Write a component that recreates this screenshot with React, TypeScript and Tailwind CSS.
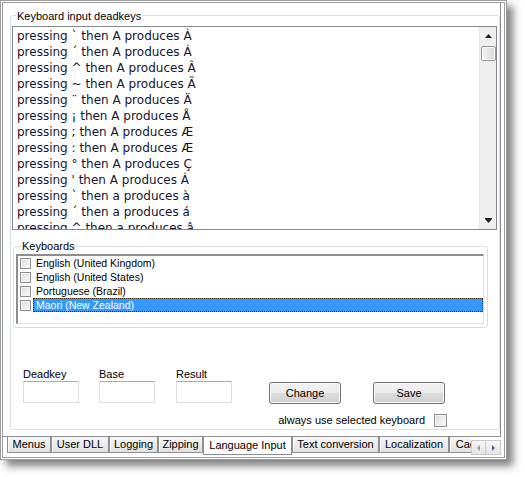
import React from "react";

const deadkeys = [
  "pressing ` then A produces À",
  "pressing ´ then A produces Á",
  "pressing ^ then A produces Â",
  "pressing ~ then A produces Ã",
  "pressing ¨ then A produces Ä",
  "pressing ¡ then A produces Å",
  "pressing ; then A produces Æ",
  "pressing : then A produces Æ",
  "pressing ° then A produces Ç",
  "pressing ' then A produces Á",
  "pressing ` then a produces à",
  "pressing ´ then a produces á",
  "pressing ^ then a produces â",
];

const keyboards = [
  "English (United Kingdom)",
  "English (United States)",
  "Portuguese (Brazil)",
  "Maori (New Zealand)",
];

const tabs = [
  { label: "Menus", w: "w-[44px]" },
  { label: "User DLL", w: "w-[58px]" },
  { label: "Logging", w: "w-[49px]" },
  { label: "Zipping", w: "w-[45px]" },
  { label: "Language Input", w: "w-[89px]", active: true },
  { label: "Text conversion", w: "w-[87px]" },
  { label: "Localization", w: "w-[70px]" },
  { label: "Caching", w: "w-[54px]" },
];

function Check({ size }: { size: string }) {
  return (
    <div
      className={`${size} shrink-0 border border-[#8e8f8f] bg-gradient-to-br from-[#dcdcdc] to-[#fbfbfb] shadow-[inset_0_0_0_1px_#f4f4f4]`}
    />
  );
}

function Field({ label, className }: { label: string; className: string }) {
  return (
    <div className={`flex flex-col ${className}`}>
      <span>{label}</span>
      <div className="w-[56px] h-[22px] border border-[#dbdfe6] border-t-[#abadb3] bg-white" />
    </div>
  );
}

function WinButton({ label, className }: { label: string; className: string }) {
  return (
    <div
      className={`${className} w-[72px] h-[22px] rounded-[3px] border border-[#707070] flex items-center justify-center shadow-[inset_0_0_0_1px_#fbfbfb] bg-[linear-gradient(to_bottom,#f2f2f2_0%,#ebebeb_50%,#dddddd_51%,#cfcfcf_100%)]`}
    >
      {label}
    </div>
  );
}

export default function App() {
  return (
    <div className="w-[525px] h-[477px] bg-white font-['Liberation_Sans',Arial,sans-serif] text-[11px] leading-[13px] text-black">
      <div className="w-[507px] h-[460px] border border-[#9d9d9d] bg-white p-px shadow-[6px_6px_8px_rgba(0,0,0,0.5)]">
        <div className="h-full border border-[#9d9d9d] flex flex-col">
          {/* tab page */}
          <div className="w-[498px] h-[434px] shrink-0 border-r border-b border-[#8c8e94] pt-[12px] pl-[7px]">
            <div className="relative w-[490px] h-[415px] rounded-[3px] border border-[#d5dfe5] pt-[10px]">
              <span className="absolute left-[5px] top-[-6px] bg-white px-px">Keyboard input deadkeys</span>

              {/* deadkey list */}
              <div className="ml-px w-[485px] h-[204px] border border-[#828790] flex bg-white">
                <div className="flex-1 overflow-hidden pl-[4px] pt-px font-['DejaVu_Sans',sans-serif] text-[12px] leading-[16px] text-[#141432] whitespace-pre">
                  {deadkeys.map((l, i) => (
                    <div key={i}>{l}</div>
                  ))}
                </div>
                <div className="w-[17px] bg-[#efefef] border-l border-[#e8e8e8] flex flex-col items-center">
                  <div className="h-[17px] flex items-center justify-center">
                    <svg width="7" height="4" viewBox="0 0 7 4">
                      <path d="M3.5 0 L7 4 L0 4 Z" fill="#222" />
                    </svg>
                  </div>
                  <div className="mt-[2px] w-[15px] h-[15px] rounded-[2px] border border-[#979797] bg-gradient-to-r from-[#f3f3f3] to-[#d9d9d9] shadow-[inset_0_0_0_1px_#fcfcfc]" />
                  <div className="flex-1" />
                  <div className="h-[17px] flex items-center justify-center">
                    <svg width="7" height="5" viewBox="0 0 7 5">
                      <path d="M0 0 H7 V1 L3.5 5 L0 1 Z" fill="#222" />
                    </svg>
                  </div>
                </div>
              </div>

              {/* keyboards group */}
              <div className="relative ml-[2px] mt-[16px] w-[475px] h-[82px] rounded-[3px] border border-[#d5dfe5]">
                <span className="absolute left-[7px] top-[-7px] bg-white px-px">Keyboards</span>
                <div className="ml-[2px] mt-[7px] w-[468px] h-[70px] border-t-2 border-l-2 border-t-[#8d8d8d] border-l-[#8d8d8d] border-r border-b border-r-[#e3e3e3] border-b-[#e3e3e3] bg-white text-[10.5px]">
                  {keyboards.map((k, i) => (
                    <div key={k} className="h-[14px] flex items-center">
                      <div className="ml-[2px]">
                        <Check size="w-[11px] h-[11px]" />
                      </div>
                      {i === 3 ? (
                        <div className="ml-[2px] flex-1 h-[14px] flex items-center pl-[3px] bg-[#3399ff] text-white outline-1 outline-dotted outline-[#3a2a10] -outline-offset-1">
                          {k}
                        </div>
                      ) : (
                        <div className="ml-[2px] flex-1 pl-[3px]">{k}</div>
                      )}
                    </div>
                  ))}
                </div>
              </div>

              {/* edit row */}
              <div className="mt-[40px] flex items-start">
                <Field label="Deadkey" className="ml-[12px]" />
                <Field label="Base" className="ml-[20px]" />
                <Field label="Result" className="ml-[21px]" />
                <WinButton label="Change" className="ml-[37px] mt-[14px]" />
                <WinButton label="Save" className="ml-[32px] mt-[14px]" />
              </div>

              <div className="mt-[10px] flex items-center justify-end pr-[52px] gap-[9px]">
                <span>always use selected keyboard</span>
                <Check size="w-[13px] h-[13px]" />
              </div>
            </div>
          </div>

          {/* tab strip */}
          <div className="h-[20px] flex items-start pl-[4px]">
            <div className="w-[464px] overflow-hidden flex items-start">
              {tabs.map((t) =>
                t.active ? (
                  <div
                    key={t.label}
                    className={`${t.w} shrink-0 -mt-px h-[19px] bg-white border-l border-r border-b border-[#8c8e94] flex items-center justify-center whitespace-nowrap`}
                  >
                    {t.label}
                  </div>
                ) : (
                  <div
                    key={t.label}
                    className={`${t.w} shrink-0 h-[16px] bg-gradient-to-b from-[#f6f6f6] to-[#e1e1e1] border-l border-r border-b border-[#8c8e94] shadow-[inset_1px_0_0_#fdfdfd] flex items-center justify-center whitespace-nowrap`}
                  >
                    {t.label}
                  </div>
                )
              )}
            </div>
            <div className="mt-[3px] flex">
              <div className="w-[15px] h-[15px] border border-[#c9c9c9] bg-gradient-to-b from-[#f7f7f7] to-[#e4e4e4] flex items-center justify-center">
                <svg width="3" height="6" viewBox="0 0 3 6">
                  <path d="M3 0 V6 L0 3 Z" fill="#9a9a9a" />
                </svg>
              </div>
              <div className="w-[15px] h-[15px] border border-l-0 border-[#c9c9c9] bg-gradient-to-b from-[#f7f7f7] to-[#e4e4e4] flex items-center justify-center">
                <svg width="3" height="6" viewBox="0 0 3 6">
                  <path d="M0 0 V6 L3 3 Z" fill="#4a5f92" />
                </svg>
              </div>
            </div>
          </div>
        </div>
      </div>
    </div>
  );
}
